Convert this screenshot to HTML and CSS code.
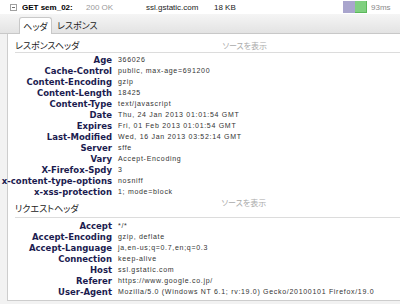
FILE: index.html
```html
<!DOCTYPE html>
<html lang="ja">
<head>
<meta charset="utf-8">
<link rel="stylesheet" href="styles.css">
</head>
<body>
<div class="req">
  <span class="toggle"></span>
  <span class="method">GET sem_02:</span>
  <span class="status">200 OK</span>
  <span class="domain">ssl.gstatic.com</span>
  <span class="size">18 KB</span>
  <span class="timeline"><span class="bar-wait"></span><span class="bar-recv"></span></span>
  <span class="time">93ms</span>
</div>
<div class="tabs">
  <span class="tab tab-active">ヘッダ</span>
  <span class="tab">レスポンス</span>
</div>
<div class="panel">
  <div class="group-title">
    <span class="title-text">レスポンスヘッダ</span>
    <span class="viewsrc">ソースを表示</span>
  </div>
  <div class="rows">
    <div class="row"><span class="name">Age</span><span class="value">366026</span></div>
    <div class="row"><span class="name">Cache-Control</span><span class="value">public, max-age=691200</span></div>
    <div class="row"><span class="name">Content-Encoding</span><span class="value">gzip</span></div>
    <div class="row"><span class="name">Content-Length</span><span class="value">18425</span></div>
    <div class="row"><span class="name">Content-Type</span><span class="value">text/javascript</span></div>
    <div class="row"><span class="name">Date</span><span class="value">Thu, 24 Jan 2013 01:01:54 GMT</span></div>
    <div class="row"><span class="name">Expires</span><span class="value">Fri, 01 Feb 2013 01:01:54 GMT</span></div>
    <div class="row"><span class="name">Last-Modified</span><span class="value">Wed, 16 Jan 2013 03:52:14 GMT</span></div>
    <div class="row"><span class="name">Server</span><span class="value">sffe</span></div>
    <div class="row"><span class="name">Vary</span><span class="value">Accept-Encoding</span></div>
    <div class="row"><span class="name">X-Firefox-Spdy</span><span class="value">3</span></div>
    <div class="row"><span class="name">x-content-type-options</span><span class="value">nosniff</span></div>
    <div class="row"><span class="name">x-xss-protection</span><span class="value">1; mode=block</span></div>
  </div>
  <div class="group-title group-title-second">
    <span class="title-text">リクエストヘッダ</span>
    <span class="viewsrc">ソースを表示</span>
  </div>
  <div class="rows rows-second">
    <div class="row"><span class="name">Accept</span><span class="value">*/*</span></div>
    <div class="row"><span class="name">Accept-Encoding</span><span class="value">gzip, deflate</span></div>
    <div class="row"><span class="name">Accept-Language</span><span class="value">ja,en-us;q=0.7,en;q=0.3</span></div>
    <div class="row"><span class="name">Connection</span><span class="value">keep-alive</span></div>
    <div class="row"><span class="name">Host</span><span class="value">ssl.gstatic.com</span></div>
    <div class="row"><span class="name">Referer</span><span class="value">https://www.google.co.jp/</span></div>
    <div class="row"><span class="name">User-Agent</span><span class="value">Mozilla/5.0 (Windows NT 6.1; rv:19.0) Gecko/20100101 Firefox/19.0</span></div>
  </div>
</div>
</body>
</html>
```

FILE: styles.css
```css
html, body {
  margin: 0;
  padding: 0;
}
body {
  width: 400px;
  height: 304px;
  overflow: hidden;
  background: #f2f2f2;
  font-family: "Liberation Sans", Arial, sans-serif;
  color: #222;
}

/* request summary row */
.req {
  display: flex;
  align-items: center;
  height: 14px;
  background: #fff;
  font-size: 8px;
  color: #222;
  white-space: nowrap;
}
.toggle {
  flex: none;
  width: 5px;
  height: 5px;
  margin-left: 10px;
  margin-right: 5px;
  border: 1px solid #a0a0a0;
  display: flex;
  align-items: center;
  justify-content: center;
}
.toggle::before {
  content: "";
  width: 3px;
  height: 1px;
  background: #707070;
}
.method {
  width: 64px;
  font-weight: bold;
  color: #000;
  overflow: hidden;
}
.status {
  width: 60px;
  color: #9a9a9a;
}
.domain {
  width: 68px;
}
.size {
  width: 129px;
}
.timeline {
  display: flex;
  width: 24px;
  height: 12px;
}
.bar-wait {
  width: 12px;
  background: #a9a5cd;
}
.bar-recv {
  width: 12px;
  background: #80d080;
  box-shadow: inset -1px -1px 0 #5cb85c;
}
.time {
  margin-left: 4px;
  color: #8a8a8a;
}

/* tabs */
.tabs {
  display: flex;
  align-items: flex-end;
  height: 19px;
  padding-left: 19px;
  background: linear-gradient(#f5f5f5, #e3e3e3);
  border-bottom: 1px solid #c8c8c8;
  font-family: "Noto Sans CJK JP", sans-serif;
  font-feature-settings: "palt";
  font-size: 9px;
  color: #222;
}
.tab {
  display: flex;
  align-items: center;
  justify-content: center;
  height: 16px;
  padding: 0 5px;
  line-height: 1;
}
.tab-active {
  width: 33px;
  box-sizing: border-box;
  padding: 0;
  height: 17px;
  margin-bottom: -1px;
  background: #fff;
  border: 1px solid #c8c8c8;
  border-bottom: none;
  border-radius: 3px 3px 0 0;
}

/* headers panel */
.panel {
  margin-left: 7px;
  height: 267px;
  box-sizing: border-box;
  padding-top: 6px;
  background: #fff;
  border-left: 1px solid #cdcdcd;
  border-bottom: 1px solid #cdcdcd;
}
.group-title {
  display: flex;
  align-items: flex-end;
  height: 12px;
  margin-left: 7px;
  border-bottom: 1px solid #dcdcdc;
  font-family: "Noto Sans CJK JP", sans-serif;
  font-feature-settings: "palt";
  white-space: nowrap;
}
.title-text {
  font-size: 9px;
  line-height: 11px;
  padding-bottom: 1px;
  color: #222;
}
.viewsrc {
  margin-left: 143px;
  font-size: 8px;
  line-height: 11px;
  padding-bottom: 1px;
  color: #aaa;
}
.group-title-second {
  height: 20px;
}
.group-title-second .title-text {
  padding-bottom: 3px;
}
.group-title-second .viewsrc {
  align-self: flex-start;
}
.rows {
  margin-top: 1px;
}
.rows-second {
  margin-top: 2px;
}
.row {
  display: flex;
  align-items: center;
  height: 11px;
  white-space: nowrap;
}
.name {
  flex: none;
  width: 104px;
  display: flex;
  justify-content: flex-end;
  font-family: "DejaVu Sans", sans-serif;
  font-weight: bold;
  font-size: 8.5px;
  color: #1c1c50;
}
.value {
  margin-left: 6px;
  font-size: 7px;
  letter-spacing: 0.7px;
  color: #333;
}
```
